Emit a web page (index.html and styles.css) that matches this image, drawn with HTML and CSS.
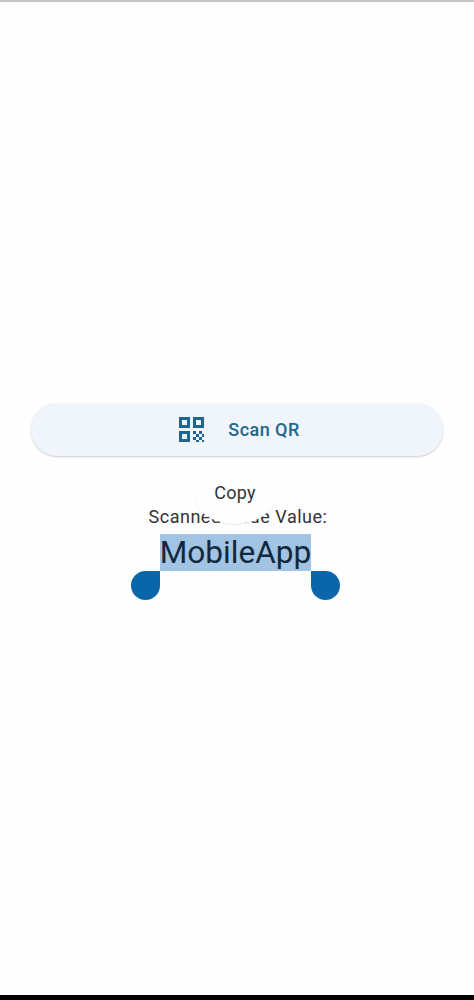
FILE: index.html
```html
<!DOCTYPE html>
<html lang="en">
<head>
<meta charset="utf-8">
<title>Scan QR</title>
<link rel="stylesheet" href="styles.css">
</head>
<body>
<div class="screen">
  <main class="content">
    <button class="scan-btn" type="button">
      <svg class="qr-icon" viewBox="0 0 25 25" aria-hidden="true">
        <path fill-rule="evenodd" d="M0 0h11v11H0zM3 3v5h5V3z"/>
        <path fill-rule="evenodd" d="M14 0h11v11H14zM17 3v5h5V3z"/>
        <path fill-rule="evenodd" d="M0 14h11v11H0zM3 17v5h5v-5z"/>
        <path d="M14 14h3v3h-3zM20 14h3v3h-3zM17 17h3v3h-3zM23 17h2v3h-2zM14 20h3v3h-3zM20 20h3v3h-3zM17 23h3v2h-3zM23 23h2v2h-2z"/>
      </svg>
      <span class="scan-label">Scan QR</span>
    </button>
    <section class="result">
      <p class="result-label">Scanned Code Value:</p>
      <div class="selection-wrap">
        <span class="result-value">MobileApp</span>
        <span class="handle handle-left"></span>
        <span class="handle handle-right"></span>
      </div>
      <div class="copy-menu">Copy</div>
    </section>
  </main>
  <div class="nav-bar"></div>
</div>
</body>
</html>
```
FILE: styles.css
```css
* { box-sizing: border-box; }
html, body { margin: 0; height: 100%; }
body {
  background: #fefefe;
  font-family: Roboto, "Liberation Sans", sans-serif;
  overflow: hidden;
}
.screen {
  height: 1000px;
  display: flex;
  flex-direction: column;
  border-top: 2px solid #c4c4c4;
}
.content {
  flex: 1;
  padding: 401px 31px 0 31px;
  display: flex;
  flex-direction: column;
  align-items: center;
}
.scan-btn {
  width: 412px;
  height: 53px;
  border: 0;
  border-radius: 27px;
  background: #f0f4fb;
  box-shadow: 0 1px 2px rgba(0, 0, 0, 0.2);
  display: flex;
  align-items: center;
  justify-content: center;
  gap: 24px;
  padding: 0 0 1px 5px;
  font-family: inherit;
}
.qr-icon {
  width: 25px;
  height: 25px;
  fill: #1d668f;
}
.scan-label {
  font-size: 18px;
  font-weight: 500;
  color: #21678c;
  letter-spacing: 0.45px;
}
.result {
  position: relative;
  left: 1px;
  margin-top: 49px;
  display: flex;
  flex-direction: column;
  align-items: center;
}
.result-label {
  margin: 0;
  font-size: 18px;
  line-height: 24px;
  color: #333338;
  letter-spacing: 0.52px;
}
.selection-wrap {
  position: relative;
  margin: 5px 5px 0 0;
  background: #a3c3e2;
  height: 37px;
  display: flex;
  align-items: center;
}
.result-value {
  font-size: 31.6px;
  line-height: 37px;
  color: #10293f;
}
.handle {
  position: absolute;
  top: 100%;
  width: 29px;
  height: 29px;
  background: #0b66a9;
}
.handle-left {
  right: 100%;
  border-radius: 50% 0 50% 50%;
}
.handle-right {
  left: 100%;
  border-radius: 0 50% 50% 50%;
}
.copy-menu {
  position: absolute;
  top: -37px;
  left: 50%;
  transform: translateX(-50%);
  margin-left: -3px;
  width: 81px;
  height: 56px;
  border-radius: 50%;
  background: #fefefe;
  box-shadow: 0 1px 1px rgba(0, 0, 0, 0.07);
  display: flex;
  align-items: center;
  justify-content: center;
  padding-bottom: 7px;
  font-size: 18px;
  letter-spacing: 0.2px;
  color: #333338;
}
.nav-bar {
  height: 5px;
  background: #000;
}
```
